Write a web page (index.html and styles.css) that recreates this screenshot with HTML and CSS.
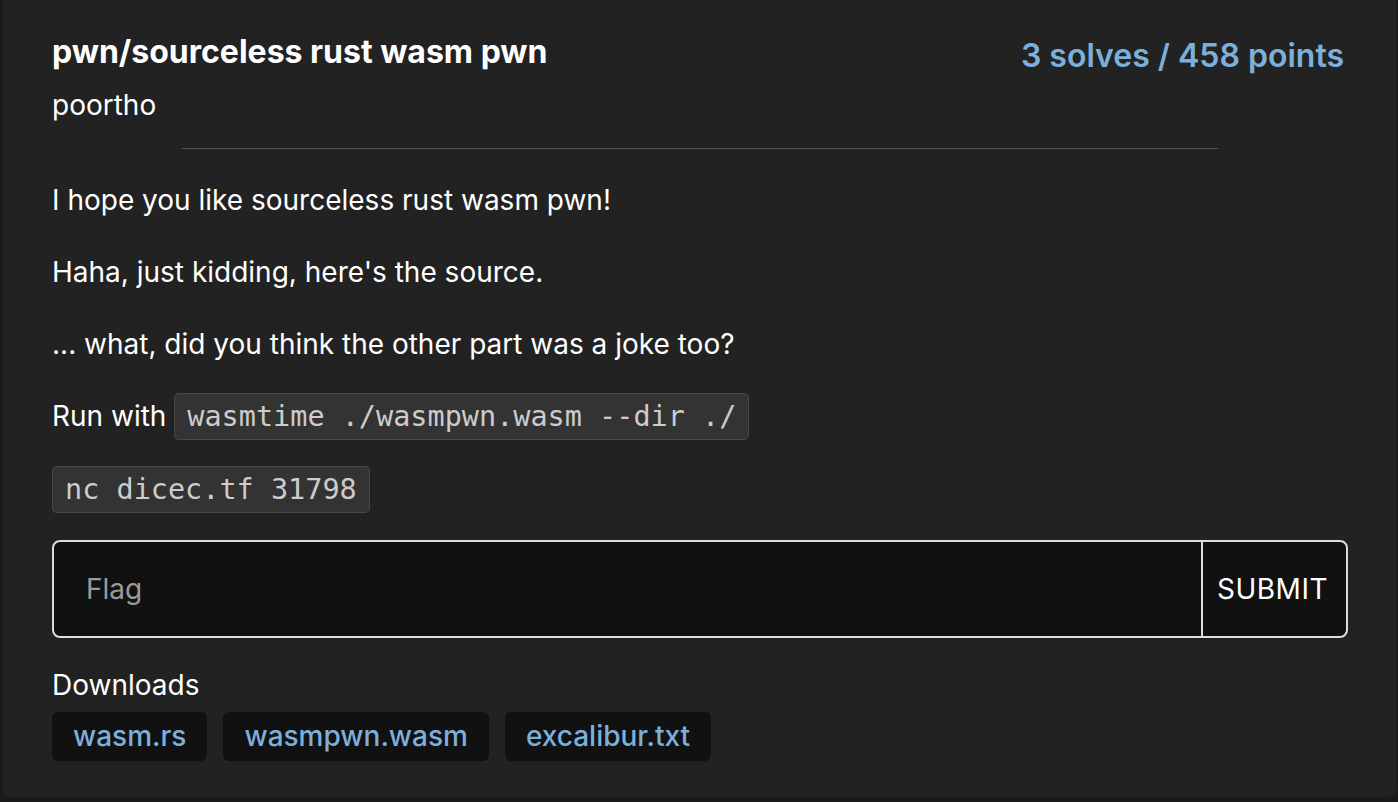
FILE: index.html
```html
<!DOCTYPE html>
<html>
<head>
<meta charset="utf-8">
<link rel="stylesheet" href="styles.css">
</head>
<body>
<div class="card">
  <div class="header">
    <div class="titles">
      <div class="title">pwn/sourceless rust wasm pwn</div>
      <div class="author">poortho</div>
    </div>
    <div class="points">3 solves / 458 points</div>
  </div>
  <div class="divider"></div>
  <div class="desc">
    <p>I hope you like sourceless rust wasm pwn!</p>
    <p>Haha, just kidding, here's the source.</p>
    <p>... what, did you think the other part was a joke too?</p>
    <p>Run with <code>wasmtime ./wasmpwn.wasm --dir ./</code></p>
    <p><code>nc dicec.tf 31798</code></p>
  </div>
  <form class="flag-form">
    <input class="flag-input" type="text" placeholder="Flag">
    <button class="submit" type="button">SUBMIT</button>
  </form>
  <div class="downloads">
    <div class="dl-label">Downloads</div>
    <div class="dl-list">
      <a class="dl" href="#">wasm.rs</a>
      <a class="dl" href="#">wasmpwn.wasm</a>
      <a class="dl" href="#">excalibur.txt</a>
    </div>
  </div>
</div>
</body>
</html>
```
FILE: styles.css
```css
html, body {
  margin: 0;
  padding: 0;
  background: #1a1a1a;
}
body {
  padding: 0 2px 0 3px;
  height: 802px;
  overflow: hidden;
  font-family: Inter, "Noto Sans", sans-serif;
  color: #fff;
}
.card {
  background: #222;
  border-radius: 0 0 8px 8px;
  padding: 32px 48px 0 49px;
  height: 797px;
  box-sizing: border-box;
}
.header {
  display: flex;
  justify-content: space-between;
  align-items: flex-start;
}
.title {
  font-size: 32px;
  font-weight: 700;
  line-height: 40px;
}
.author {
  font-size: 28px;
  line-height: 40px;
  margin-top: 13px;
}
.points {
  font-size: 32px;
  font-weight: 600;
  color: #7bb0dc;
  line-height: 40px;
  margin-top: 4px;
  margin-right: 4px;
}
.divider {
  width: 80%;
  height: 1px;
  background: #555;
  margin: 23px auto 30px;
}
.desc p {
  margin: 0 0 30px;
  font-size: 28px;
  line-height: 42px;
}
.desc p:last-child {
  margin-bottom: 29px;
}
code {
  font-family: "DejaVu Sans Mono", monospace;
  font-size: 28.5px;
  color: #ccc;
  background: #333;
  border: 1px solid #484848;
  border-radius: 5px;
  padding: 6px 12px;
}
.flag-form {
  display: flex;
  border: 2px solid #ddd;
  border-radius: 8px;
  background: #111;
  height: 98px;
  box-sizing: border-box;
  overflow: hidden;
}
.flag-input {
  flex: 1;
  background: transparent;
  border: none;
  outline: none;
  color: #fff;
  font-family: Inter, "Noto Sans", sans-serif;
  font-size: 28px;
  padding: 0 0 0 32px;
}
.flag-input::placeholder {
  color: #9a9a9a;
}
.submit {
  background: transparent;
  border: none;
  border-left: 2px solid #ddd;
  color: #fff;
  font-family: Inter, "Noto Sans", sans-serif;
  font-size: 28px;
  letter-spacing: 0.5px;
  padding: 0 18px 0 14px;
}
.downloads {
  margin-top: 27px;
}
.dl-label {
  font-size: 28px;
  line-height: 40px;
}
.dl-list {
  display: flex;
  gap: 16px;
  margin-top: 7px;
}
.dl {
  display: block;
  background: #111;
  border-radius: 6px;
  color: #7bb0dc;
  text-decoration: none;
  font-size: 28px;
  font-weight: 500;
  line-height: 49px;
  padding: 0 21px;
}
```
